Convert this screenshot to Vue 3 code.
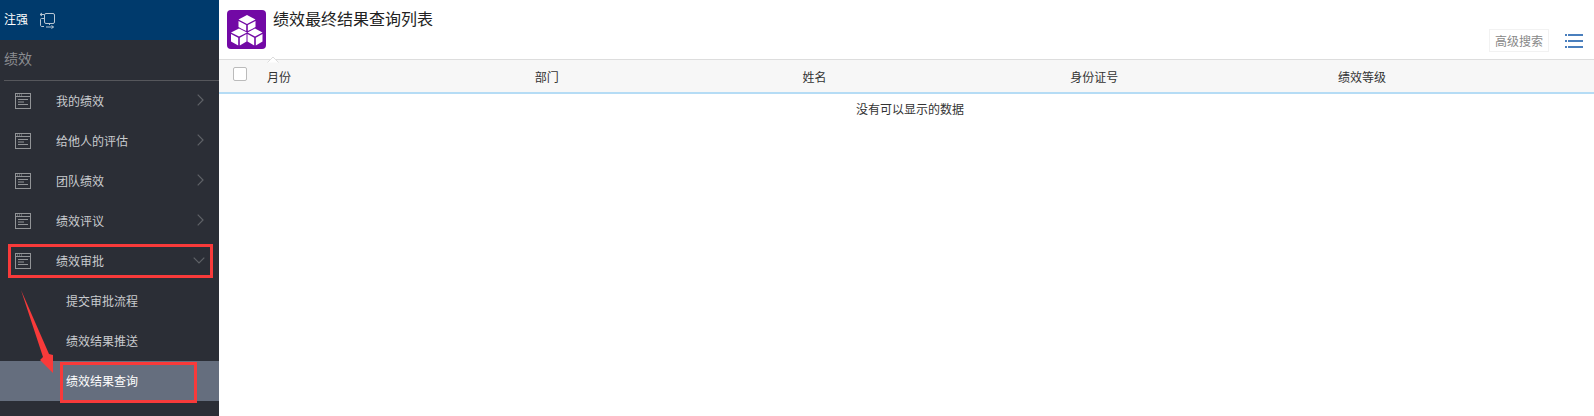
<script setup>
const menus = [
  { label: '我的绩效', open: false },
  { label: '给他人的评估', open: false },
  { label: '团队绩效', open: false },
  { label: '绩效评议', open: false },
  { label: '绩效审批', open: true },
]
const subs = [
  { label: '提交审批流程', active: false },
  { label: '绩效结果推送', active: false },
  { label: '绩效结果查询', active: true },
]
const columns = ['月份', '部门', '姓名', '身份证号', '绩效等级']
</script>

<template>
  <div class="page">
    <aside class="sidebar">
      <div class="userbar">
        <span class="username">注强</span>
        <svg class="switch" width="16" height="17" viewBox="0 0 16 17" fill="none" stroke="#b9c6d3" stroke-width="1">
          <rect x="5.5" y="1.5" width="10" height="10" rx="1.5" />
          <path d="M5.5 6.5H2.5C1.7 6.5 1.5 7 1.5 7.5V13C1.5 14 2 14.5 3 14.5H5" />
          <path d="M10.5 11.5V13" />
          <path d="M1 2.5H5M3 1L1 2.5L3 4" />
          <path d="M7 15H14.5M12.5 13.5L14.5 15L12.5 16.5" />
        </svg>
      </div>
      <div class="section"><span class="section-label">绩效</span></div>
      <nav class="nav">
        <div v-for="m in menus" :key="m.label" class="menu-item">
          <svg class="doc" width="16" height="16" viewBox="0 0 16 16" fill="none" stroke="#929497" stroke-width="1">
            <rect x="0.5" y="0.5" width="15" height="15" />
            <path d="M1 3.5H15" />
            <path d="M2 2H3M4 2H5M6 2H7" />
            <path d="M3 6.5H13M3 9H9M3 11.5H13" />
          </svg>
          <span class="menu-label">{{ m.label }}</span>
          <svg v-if="!m.open" class="chev" width="7" height="12" viewBox="0 0 7 12" fill="none" stroke="#5f6267" stroke-width="1.2">
            <path d="M0.7 0.7L6 6L0.7 11.3" />
          </svg>
          <svg v-else class="chev-down" width="12" height="7" viewBox="0 0 12 7" fill="none" stroke="#5f6267" stroke-width="1.2">
            <path d="M0.7 0.7L6 6L11.3 0.7" />
          </svg>
        </div>
        <div v-for="s in subs" :key="s.label" class="sub-item" :class="{ active: s.active }">
          <span class="sub-label">{{ s.label }}</span>
        </div>
      </nav>
      <div class="mark mark-menu"></div>
      <div class="mark mark-sub"></div>
      <svg class="arrow" width="34" height="85" viewBox="0 0 34 85">
        <path d="M0 0L28 64L32 65L32 83L19 70L22 67Z" fill="#f83a3a" />
      </svg>
    </aside>

    <main class="content">
      <header class="top">
        <div class="logo">
          <svg width="39" height="39" viewBox="0 0 39 39" fill="#fff">
            <path d="M20 5L28.5 9.5L20 14L11.5 9.5Z" />
            <path d="M11.5 11L19.2 15V21L15 19L11.5 17Z" />
            <path d="M28.5 11V17L25 19L20.8 21V15Z" />
            <path d="M12 18.5L20 22.5L12 26.5L4 22.5Z" />
            <path d="M4 24L11.2 27.7V35.5L4 31.5Z" />
            <path d="M19.5 24V31.5L12.8 35.5V27.7Z" />
            <path d="M28 18.5L35.5 22.5L28 26.5L20.5 22.5Z" />
            <path d="M20.5 24L27.2 27.7V35.5L20.5 31.5Z" />
            <path d="M35.5 24V31.5L28.8 35.5V27.7Z" />
          </svg>
        </div>
        <h1 class="title">绩效最终结果查询列表</h1>
        <div class="tools">
          <span class="adv">高级搜索</span>
          <svg class="list" width="18" height="14" viewBox="0 0 18 14" fill="#4a7fbd">
            <rect x="0" y="0" width="2" height="2" />
            <rect x="3" y="0" width="15" height="2" />
            <rect x="0" y="6" width="2" height="2" />
            <rect x="3" y="6" width="15" height="2" />
            <rect x="0" y="12" width="2" height="2" />
            <rect x="3" y="12" width="15" height="2" />
          </svg>
        </div>
      </header>
      <div class="table-wrap">
        <div class="thead">
          <span class="check"></span>
          <div class="cols">
            <span v-for="c in columns" :key="c" class="col">{{ c }}</span>
          </div>
        </div>
        <svg class="notch" width="12" height="7" viewBox="0 0 12 7">
          <path d="M0.5 6.5L6 1L11.5 6.5Z" fill="#fff" />
          <path d="M0.5 6.5L6 1L11.5 6.5" fill="none" stroke="#ddd" />
        </svg>
        <div class="empty">没有可以显示的数据</div>
      </div>
    </main>
  </div>
</template>

<style>
html, body { margin: 0; padding: 0; background: #fff; }
</style>

<style scoped>
.page {
  display: flex;
  width: 1594px;
  height: 416px;
  overflow: hidden;
  font-family: "Noto Sans CJK SC", "Noto Sans", sans-serif;
  font-size: 12px;
}
.sidebar {
  position: relative;
  width: 219px;
  flex: none;
  background: #2b2e36;
  color: #c9cbce;
}
.userbar {
  display: flex;
  align-items: center;
  height: 40px;
  padding-left: 4px;
  background: #003a6c;
  color: #fff;
}
.username { padding-bottom: 3px; }
.switch { margin-left: 11px; }
.section {
  display: flex;
  align-items: center;
  height: 40px;
  box-sizing: content-box;
  margin-left: 4px;
  border-bottom: 1px solid #56575c;
  font-size: 14px;
  color: #8b8d91;
}
.section-label { padding-bottom: 4px; }
.nav { display: flex; flex-direction: column; }
.menu-item {
  display: flex;
  align-items: center;
  height: 40px;
  padding-left: 15px;
  position: relative;
}
.menu-label { margin-left: 25px; padding-bottom: 2px; }
.chev { position: absolute; left: 197px; top: 13px; }
.chev-down { position: absolute; left: 193px; top: 16px; }
.sub-item {
  display: flex;
  align-items: center;
  height: 40px;
  padding-left: 66px;
}
.sub-label { padding-bottom: 2px; }
.sub-item.active {
  background: #656e7e;
  color: #fff;
}
.mark {
  position: absolute;
  border: 3px solid #f83a3a;
  box-sizing: border-box;
}
.mark-menu { left: 8px; top: 244px; width: 205px; height: 34px; }
.mark-sub { left: 60px; top: 362px; width: 137px; height: 41px; }
.arrow { position: absolute; left: 21px; top: 290px; }
.content { flex: 1; min-width: 0; }
.top {
  position: relative;
  height: 59px;
}
.logo {
  position: absolute;
  left: 8px;
  top: 10px;
  width: 39px;
  height: 39px;
  border-radius: 4px;
  background: #7209a5;
}
.logo svg { display: block; }
.title {
  position: absolute;
  left: 54px;
  top: 7px;
  margin: 0;
  font-size: 16px;
  line-height: 22px;
  font-weight: 400;
  color: #222;
}
.tools {
  position: absolute;
  right: 11px;
  top: 29px;
  display: flex;
  align-items: center;
  gap: 16px;
}
.adv {
  padding: 0 5px;
  border: 1px solid #f2f2f2;
  color: #888;
  line-height: 21px;
}
.list { display: block; }
.table-wrap { position: relative; }
.notch {
  position: absolute;
  left: 48px;
  top: -3px;
  display: block;
}
.thead {
  display: flex;
  align-items: center;
  height: 35px;
  box-sizing: border-box;
  border-top: 1px solid #ddd;
  border-bottom: 2px solid #b5dcf5;
  background: #f7f7f7;
  color: #333;
}
.check {
  width: 12px;
  height: 12px;
  margin: -4px 0 0 14px;
  flex: none;
  border: 1px solid #bbb;
  border-radius: 2px;
  background: #fff;
}
.cols {
  display: flex;
  margin-left: 20px;
}
.col { width: 267.75px; }
.empty {
  width: 1382px;
  padding-top: 6px;
  text-align: center;
  color: #333;
  line-height: 18px;
}
</style>
